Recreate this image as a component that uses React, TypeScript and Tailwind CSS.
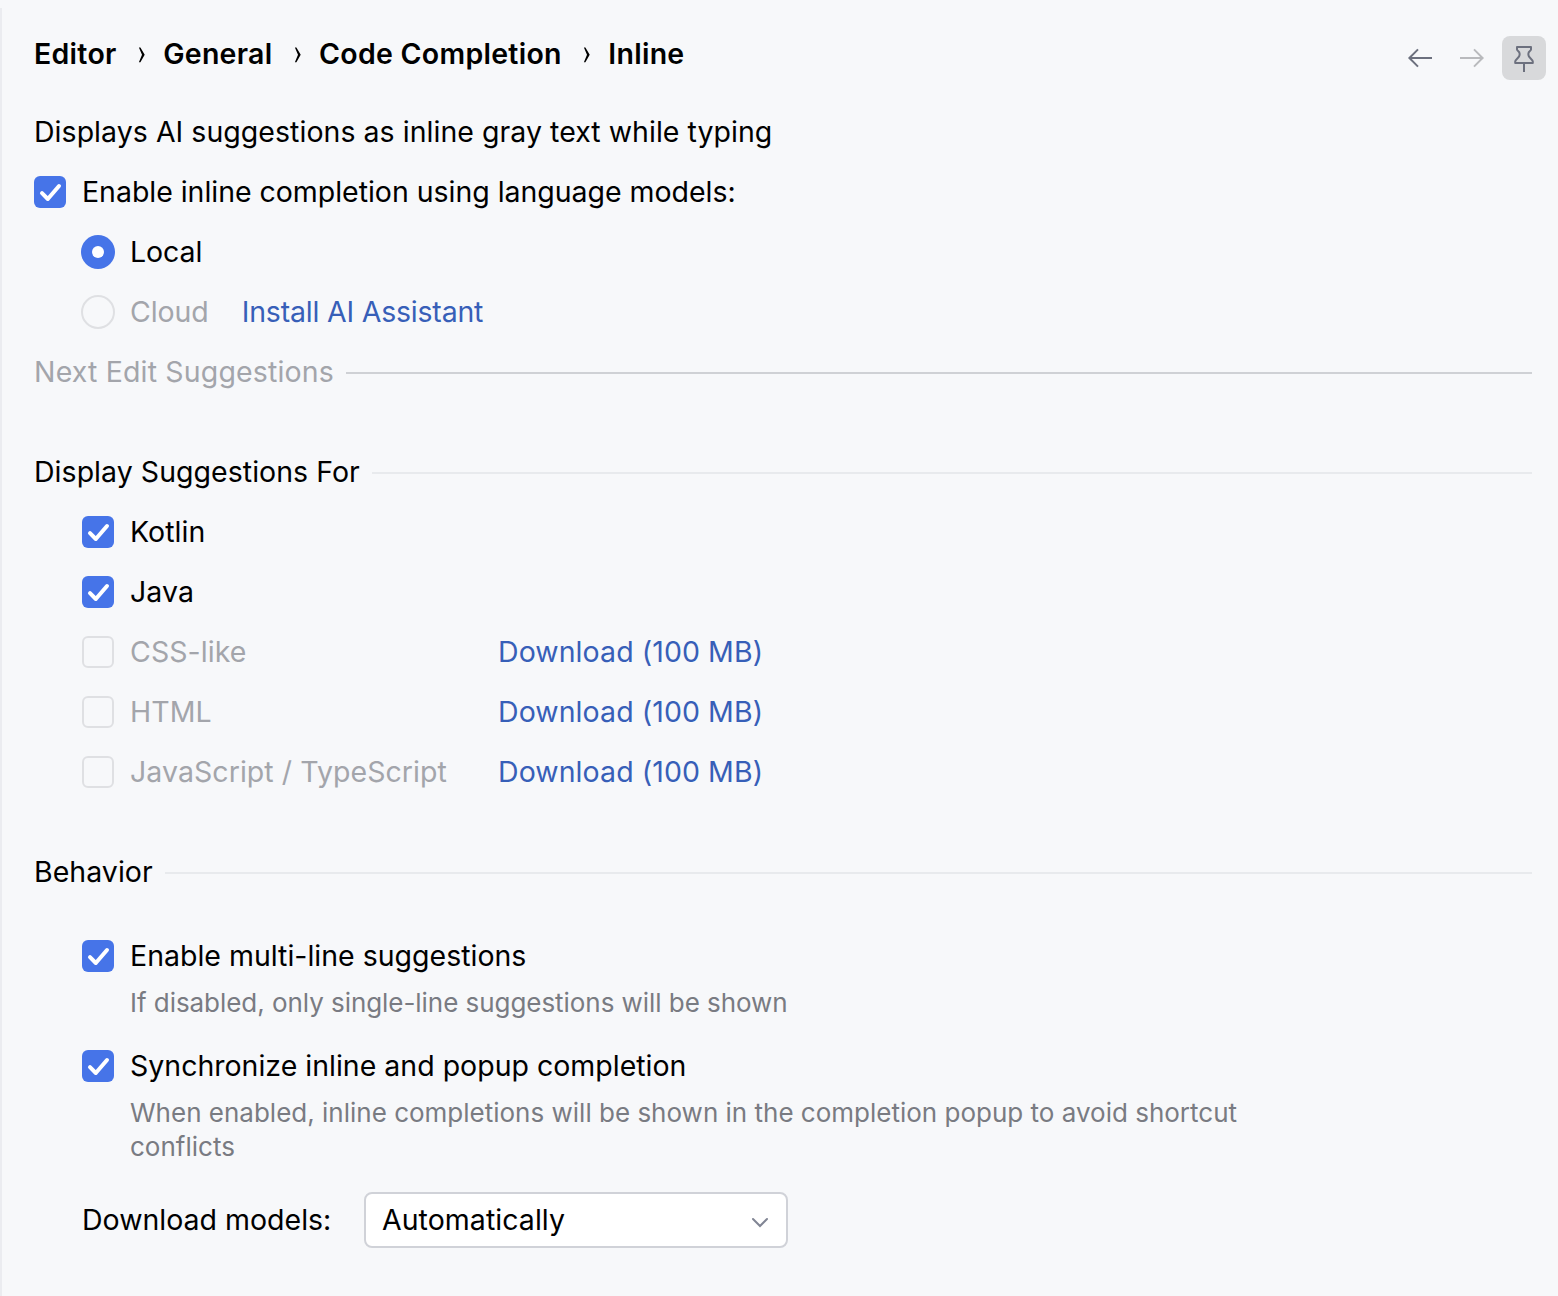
import React, { useState } from 'react';
import clsx from 'clsx';

type CheckboxProps = {
  checked?: boolean;
  disabled?: boolean;
  label: string;
  className?: string;
  onChange?: () => void;
};

function Checkbox({ checked, disabled, label, className, onChange }: CheckboxProps) {
  return (
    <button
      type="button"
      role="checkbox"
      aria-checked={!!checked}
      disabled={disabled}
      onClick={onChange}
      className="flex h-[60px] items-center gap-4 whitespace-nowrap text-left"
    >
      <span
        className={clsx(
          'flex size-8 shrink-0 items-center justify-center rounded-md',
          checked ? 'bg-[#4674e8]' : 'border-2 border-[#dfe0e3]'
        )}
      >
        {checked ? (
          <svg width="32" height="32" viewBox="0 0 32 32" fill="none">
            <path d="M8 17.2L13.8 23L25 10" stroke="white" strokeWidth="4" strokeLinecap="round" strokeLinejoin="round" />
          </svg>
        ) : null}
      </span>
      <span className={clsx(disabled ? 'text-[#a3a5ab]' : 'text-black', className)}>{label}</span>
    </button>
  );
}

type RadioProps = {
  checked?: boolean;
  disabled?: boolean;
  label: string;
};

function Radio({ checked, disabled, label }: RadioProps) {
  return (
    <div role="radio" aria-checked={!!checked} className="-ml-px flex h-[60px] items-center gap-[15px]">
      <span
        className={clsx(
          'flex size-[34px] items-center justify-center rounded-full',
          checked ? 'bg-[#4674e8]' : 'border-2 border-[#dfe0e3]'
        )}
      >
        {checked ? <span className="size-3 rounded-full bg-white" /> : null}
      </span>
      <span className={clsx('tracking-[-0.08px]', disabled ? 'text-[#a3a5ab]' : 'text-black')}>{label}</span>
    </div>
  );
}

function SectionTitle({ title, disabled }: { title: string; disabled?: boolean }) {
  return (
    <div className="flex h-[60px] items-center gap-3">
      <h2 className={disabled ? 'tracking-[0.16px] text-[#a3a5ab]' : 'tracking-[0.04px] text-black'}>{title}</h2>
      <div className={clsx('mt-0.5 h-0.5 flex-1', disabled ? 'bg-[#cfd1d5]' : 'bg-[#e8eaed]')} />
    </div>
  );
}

function Link({ children, className }: { children: React.ReactNode; className?: string }) {
  return (
    <a href="#" className={clsx('whitespace-nowrap text-[#375fb8]', className)}>
      {children}
    </a>
  );
}

function BreadcrumbArrow() {
  return (
    <svg width="8" height="16" viewBox="0 0 8 16" className="mt-0.5 shrink-0">
      <path d="M0.9 0.5L2.4 0.5L6.7 7.7L2.4 15.2L0.9 15.2L4 7.7Z" fill="black" />
    </svg>
  );
}

function HeaderActions() {
  return (
    <div className="flex items-center">
      <button type="button" aria-label="Back" className="flex h-11 w-[52px] items-center justify-center">
        <svg width="28" height="28" viewBox="0 0 28 28" fill="none" stroke="#6c707e" strokeWidth="2">
          <path d="M26 14H3.5M12 5.4L3.4 14L12 22.6" />
        </svg>
      </button>
      <button type="button" aria-label="Forward" className="flex h-11 w-[52px] items-center justify-center">
        <svg width="28" height="28" viewBox="0 0 28 28" fill="none" stroke="#b9babd" strokeWidth="2">
          <path d="M2 14H24.5M16 5.4L24.6 14L16 22.6" />
        </svg>
      </button>
      <button type="button" aria-label="Pin" className="ml-1 flex size-11 items-center justify-center rounded-lg bg-[#d8d9db]">
        <svg width="32" height="32" viewBox="0 0 32 32" fill="none" stroke="#6c707e" strokeWidth="2" strokeLinejoin="round">
          <path d="M9 5H23V7.6C23 8.8 20.4 9.6 20.4 11.4V13C20.4 15.6 24.8 17.2 24.8 19.6V21H7.2V19.6C7.2 17.2 11.6 15.6 11.6 13V11.4C11.6 9.6 9 8.8 9 7.6Z" />
          <path d="M16 21V30" />
        </svg>
      </button>
    </div>
  );
}

const crumbs = ['Editor', 'General', 'Code Completion', 'Inline'];

const languages = [
  { name: 'Kotlin', installed: true },
  { name: 'Java', installed: true },
  { name: 'CSS-like', installed: false },
  { name: 'HTML', installed: false },
  { name: 'JavaScript / TypeScript', installed: false },
];

export default function App() {
  const [enabled, setEnabled] = useState(true);
  const [multiLine, setMultiLine] = useState(true);
  const [sync, setSync] = useState(true);

  return (
    <div className="flex h-[1296px] w-[1558px] flex-col overflow-hidden bg-[#f7f8fa] pt-2 font-['Inter',sans-serif] text-[28.5px] leading-[34px] text-black">
      <div className="flex-1 border-l-2 border-[#ebecf0] pl-8">
        <header className="flex h-[94px] items-start justify-between pr-3">
          <nav className="flex items-center pt-[29px] font-semibold tracking-[0.28px]">
            {crumbs.map((crumb, i) => (
              <React.Fragment key={crumb}>
                {i > 0 ? (
                  <span className="flex w-[46.5px] justify-center pl-1">
                    <BreadcrumbArrow />
                  </span>
                ) : null}
                <span className="whitespace-nowrap">{crumb}</span>
              </React.Fragment>
            ))}
          </nav>
          <div className="pt-7">
            <HeaderActions />
          </div>
        </header>

        <main className="pr-[26px]">
          <p className="flex h-[60px] items-center tracking-[0.04px]">Displays AI suggestions as inline gray text while typing</p>
          <Checkbox
            checked={enabled}
            onChange={() => setEnabled(!enabled)}
            label="Enable inline completion using language models:"
            className="tracking-[-0.03px]"
          />
          <div role="radiogroup" className="pl-12">
            <Radio checked label="Local" />
            <div className="flex items-center gap-[33px]">
              <Radio disabled label="Cloud" />
              <Link className="tracking-[-0.2px]">Install AI Assistant</Link>
            </div>
          </div>

          <SectionTitle title="Next Edit Suggestions" disabled />

          <section className="pt-10">
            <SectionTitle title="Display Suggestions For" />
            <div className="pl-12">
              {languages.map((lang) => (
                <div key={lang.name} className="flex items-center">
                  <div className="w-[416px]">
                    <Checkbox
                      checked={lang.installed}
                      disabled={!lang.installed}
                      label={lang.name}
                      className="tracking-[0.06px]"
                    />
                  </div>
                  {lang.installed ? null : <Link className="tracking-[0.08px]">Download (100 MB)</Link>}
                </div>
              ))}
            </div>
          </section>

          <section className="pt-10">
            <SectionTitle title="Behavior" />
            <div className="pt-6 pl-12">
              <Checkbox checked={multiLine} onChange={() => setMultiLine(!multiLine)} label="Enable multi-line suggestions" />
              <p className="pl-12 text-[26px] tracking-[-0.05px] text-[#797b82]">
                If disabled, only single-line suggestions will be shown
              </p>
              <div className="pt-4">
                <Checkbox checked={sync} onChange={() => setSync(!sync)} label="Synchronize inline and popup completion" />
              </div>
              <p className="w-[1200px] pl-12 text-[26px] text-[#797b82]">
                When enabled, inline completions will be shown in the completion popup to avoid shortcut conflicts
              </p>
              <div className="flex items-center pt-7">
                <span className="w-[282px]">Download models:</span>
                <button
                  type="button"
                  className="flex h-14 w-[424px] items-center justify-between rounded-lg border-2 border-[#d0d2d8] bg-white pr-4 pl-4"
                >
                  <span className="tracking-[0.05px]">Automatically</span>
                  <svg width="20" height="20" viewBox="0 0 20 20" fill="none" className="mt-[3px]">
                    <path d="M3 7L10 14L17 7" stroke="#818594" strokeWidth="2" strokeLinecap="round" />
                  </svg>
                </button>
              </div>
            </div>
          </section>
        </main>
      </div>
    </div>
  );
}
